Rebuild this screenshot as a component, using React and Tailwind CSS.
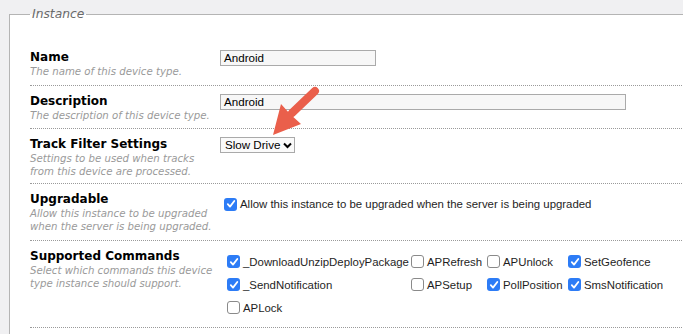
import React from "react";

const SANS = '"Liberation Sans", Arial, sans-serif';

const Check = ({ on }) =>
  on ? (
    <span className="inline-flex h-[13px] w-[13px] shrink-0 items-center justify-center rounded-[3px] bg-[#2d7cf6]">
      <svg width="10" height="10" viewBox="0 0 10 10">
        <path d="M1.8 5.2 L4 7.6 L8.3 2" fill="none" stroke="#fff" strokeWidth="1.8" strokeLinecap="round" strokeLinejoin="round" />
      </svg>
    </span>
  ) : (
    <span className="inline-block h-[13px] w-[13px] shrink-0 rounded-[3px] border border-[#8a8a8a] bg-white" />
  );

const Item = ({ on, label }) => (
  <div className="flex h-[23px] items-center gap-[3px]">
    <Check on={on} />
    <span className="whitespace-nowrap text-[11.4px] leading-[14px] text-[#1e1e1e]" style={{ fontFamily: SANS }}>
      {label}
    </span>
  </div>
);

const Row = ({ title, desc, h, children }) => (
  <div className={`flex border-b border-dotted border-[#9a9a9a] ${h}`}>
    <div className="w-[190px] shrink-0 pt-[8px]">
      <div className="whitespace-nowrap text-[12px] font-bold leading-[15px] text-black">{title}</div>
      <div className="text-[10.2px] italic leading-[13px] text-[#9a9a9a]">
        {desc.map((d, i) => (
          <div key={i} className="whitespace-nowrap">{d}</div>
        ))}
      </div>
    </div>
    <div className="pt-[8px]">{children}</div>
  </div>
);

export default function App() {
  return (
    <div
      className="relative h-[334px] w-[683px] overflow-hidden bg-[#f0f0f2]"
      style={{ fontFamily: '"DejaVu Sans", Verdana, sans-serif' }}
    >
      <fieldset className="ml-[9px] mt-[6px] h-[400px] w-[720px] border border-[#b4b4b4] bg-white pl-[20px]">
        <legend className="px-[2px] text-[12.3px] italic leading-[16px] text-[#6a6a6a]">Instance</legend>
        <div className="h-[20px]" />
        <Row title="Name" desc={["The name of this device type."]} h="h-[44px]">
          <div className="h-[16px] w-[156px] whitespace-nowrap border border-[#aaaaaa] bg-[#f7f7f7] pl-[3px] text-[11.6px] leading-[14px] text-black" style={{ fontFamily: SANS }}>
            Android
          </div>
        </Row>
        <Row title="Description" desc={["The description of this device type."]} h="h-[43px]">
          <div className="h-[16px] w-[406px] whitespace-nowrap border border-[#aaaaaa] bg-[#f7f7f7] pl-[3px] text-[11.6px] leading-[14px] text-black" style={{ fontFamily: SANS }}>
            Android
          </div>
        </Row>
        <Row title="Track Filter Settings" desc={["Settings to be used when tracks", "from this device are processed."]} h="h-[55px]">
          <div className="flex h-[16px] w-[75px] items-center gap-[3px] whitespace-nowrap border border-[#aaaaaa] bg-[#fafafa] pl-[4px] text-[11.6px] leading-[14px] text-black" style={{ fontFamily: SANS }}>
            <span>Slow Drive</span>
            <svg width="9" height="7" viewBox="0 0 9 7">
              <path d="M1 1.5 L4.5 5 L8 1.5" fill="none" stroke="#000" strokeWidth="2" />
            </svg>
          </div>
        </Row>
        <Row title="Upgradable" desc={["Allow this instance to be upgraded", "when the server is being upgraded."]} h="h-[57px]">
          <div className="ml-[4px] mt-[5px] flex items-center gap-[3px]">
            <Check on />
            <span className="whitespace-nowrap text-[11.4px] leading-[14px] text-[#1e1e1e]" style={{ fontFamily: SANS }}>
              Allow this instance to be upgraded when the server is being upgraded
            </span>
          </div>
        </Row>
        <Row title="Supported Commands" desc={["Select which commands this device", "type instance should support."]} h="h-[87px]">
          <div className="ml-[7px] mt-[1px] grid grid-cols-[184px_76px_81px_120px]">
            <Item on label="_DownloadUnzipDeployPackage" />
            <Item label="APRefresh" />
            <Item label="APUnlock" />
            <Item on label="SetGeofence" />
            <Item on label="_SendNotification" />
            <Item label="APSetup" />
            <Item on label="PollPosition" />
            <Item on label="SmsNotification" />
            <Item label="APLock" />
          </div>
        </Row>
      </fieldset>
      <svg className="pointer-events-none absolute left-0 top-0" width="683" height="334">
        <line x1="315" y1="91" x2="292" y2="113" stroke="#ea5f4b" strokeWidth="8" strokeLinecap="round" />
        <path d="M273 135 L281 104 L290 114 L301 124 Z" fill="#ea5f4b" />
      </svg>
    </div>
  );
}
